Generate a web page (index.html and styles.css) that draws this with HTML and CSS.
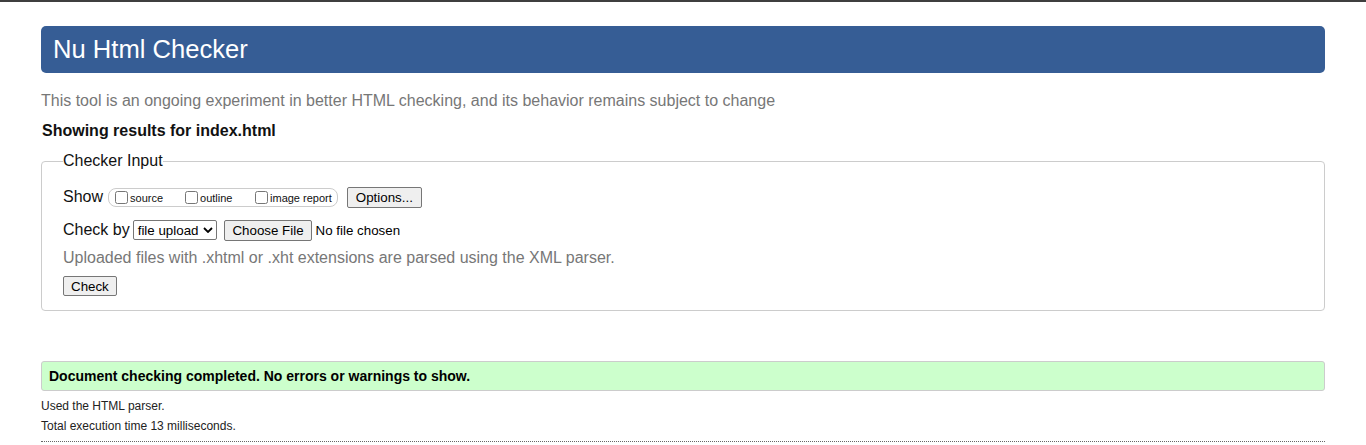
FILE: index.html
```html
<!DOCTYPE html>
<html lang="en">
<head>
<meta charset="utf-8">
<title>Nu Html Checker</title>
<link rel="stylesheet" href="styles.css">
</head>
<body>
<div class="page">
  <h1 class="banner">Nu Html Checker</h1>
  <p class="intro">This tool is an ongoing experiment in better HTML checking, and its behavior remains subject to change</p>
  <p class="results-for">Showing results for index.html</p>
  <form class="checker">
    <fieldset class="checker-input">
      <legend class="legend">Checker Input</legend>
      <div class="row">
        <span class="label">Show</span>
        <span class="show-group">
          <label class="opt"><input type="checkbox" class="cb"><span class="opt-text">source</span></label>
          <label class="opt"><input type="checkbox" class="cb"><span class="opt-text">outline</span></label>
          <label class="opt"><input type="checkbox" class="cb"><span class="opt-text">image report</span></label>
        </span>
        <button type="button" class="btn options">Options...</button>
      </div>
      <div class="row row-check">
        <span class="label">Check by</span>
        <span class="select">file upload<svg class="chev" viewBox="0 0 10 6" width="10" height="6"><path d="M1 1 L5 5 L9 1" fill="none" stroke="#000" stroke-width="1.8"/></svg></span>
        <button type="button" class="btn choose">Choose File</button>
        <span class="nofile">No file chosen</span>
      </div>
      <p class="hint">Uploaded files with .xhtml or .xht extensions are parsed using the XML parser.</p>
      <button type="button" class="btn check">Check</button>
    </fieldset>
  </form>
  <p class="success">Document checking completed. No errors or warnings to show.</p>
  <p class="meta">Used the HTML parser.</p>
  <p class="meta">Total execution time 13 milliseconds.</p>
  <hr class="dotted">
</div>
</body>
</html>
```

FILE: styles.css
```css
html, body {
  margin: 0;
  padding: 0;
  background: #fff;
}
body {
  border-top: 2px solid #3f3f3f;
  font-family: "Liberation Sans", Arial, sans-serif;
  color: #111;
}
.page {
  margin: 0 41px;
  padding-top: 24px;
}
.banner {
  margin: 0;
  height: 47px;
  line-height: 47px;
  background: #365d95;
  color: #fff;
  border-radius: 5px;
  font-size: 25.6px;
  font-weight: normal;
  padding: 0 12px;
}
.intro {
  margin: 18px 0 0;
  font-size: 16px;
  line-height: 20px;
  color: #777;
}
.results-for {
  margin: 10px 0 0 1px;
  font-size: 16px;
  line-height: 20px;
  font-weight: bold;
  color: #111;
}
.checker {
  margin: 11px 0 0;
}
.checker-input {
  margin: 0;
  border: 1px solid #ccc;
  border-radius: 4px;
  padding: 16px 21px 14px;
}
.legend {
  font-size: 16px;
  padding: 0;
  margin-left: 0;
  color: #111;
}
.row {
  display: flex;
  align-items: center;
  height: 22px;
  font-size: 16px;
}
.row-check {
  margin-top: 11px;
}
.label {
  margin-right: 5px;
  color: #111;
}
.show-group {
  display: inline-flex;
  align-items: center;
  height: 17px;
  border: 1px solid #ccc;
  border-radius: 8px;
  padding: 0 5px 0 6px;
  gap: 8px;
}
.opt {
  display: inline-flex;
  align-items: center;
  font-size: 11px;
  color: #111;
  min-width: 62px;
}
.opt:last-child {
  min-width: 0;
}
.opt-text {
  position: relative;
  top: 1px;
}
.cb {
  width: 13px;
  height: 13px;
  margin: 0 2px 0 0;
}
.btn {
  font-family: "Liberation Sans", Arial, sans-serif;
  font-size: 13.33px;
  background: #efefef;
  border: 1px solid #767676;
  border-radius: 2px;
  color: #000;
  padding: 1px 7px;
  height: 21px;
}
.options {
  margin-left: 9px;
  padding: 1px 8px;
}
.select {
  display: inline-flex;
  align-items: center;
  height: 18px;
  border: 1px solid #767676;
  border-radius: 2px;
  font-size: 13.33px;
  padding: 0 3px 0 4px;
  color: #000;
  margin-right: 7px;
  margin-left: -2px;
  background: #fff;
}
.chev {
  margin-left: 5px;
}
.choose {
  height: 21px;
}
.nofile {
  font-size: 13.33px;
  margin-left: 4px;
  color: #000;
}
.hint {
  margin: 7px 0 0;
  font-size: 16px;
  line-height: 20px;
  color: #777;
}
.check {
  margin-top: 8px;
  height: 20px;
}
.success {
  margin: 50px 0 0;
  background: #cfc;
  border: 1px solid #ccc;
  border-radius: 3px;
  padding: 0 7px;
  height: 28px;
  line-height: 28px;
  font-size: 14px;
  font-weight: bold;
  color: #000;
}
.meta {
  margin: 7px 0 0;
  font-size: 12px;
  line-height: 16px;
  color: #222;
}
.meta + .meta {
  margin-top: 4px;
}
.dotted {
  margin: 7px 0 0;
  border: 0;
  border-top: 1px dotted #666;
}
```
